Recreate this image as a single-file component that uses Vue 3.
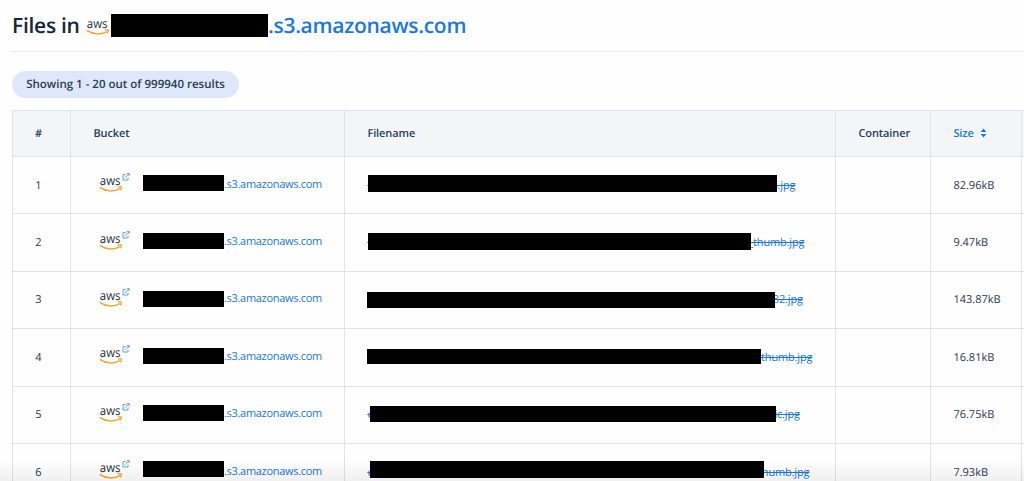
<template>
  <div class="page">
    <header class="title">
      <span class="title-text">Files in</span>
      <svg class="title-logo" viewBox="0 0 24 18">
        <text class="logo-text" x="0.8" y="9.6" textLength="20.6" lengthAdjust="spacingAndGlyphs">aws</text>
        <path class="smile" d="M0.8 12.4 C7 16.8 15 17 20.8 13.6" />
        <path class="smile" d="M18.8 12.2 C20.6 11.6 22.1 11.7 22.3 12.2 C22.5 12.8 22 14.2 21 15.2" />
      </svg>
      <span class="title-mask"></span>
      <a class="title-link">.s3.amazonaws.com</a>
    </header>

    <div class="badge">Showing 1 - 20 out of 999940 results</div>

    <div class="table">
      <div class="row head">
        <div class="cell num">#</div>
        <div class="cell">Bucket</div>
        <div class="cell">Filename</div>
        <div class="cell">Container</div>
        <div class="cell sort">
          <span>Size</span>
          <svg class="sort-icon" viewBox="0 0 7 10">
            <path d="M3.5 0.6 L6.4 4 H0.6 Z M3.5 9.4 L6.4 6 H0.6 Z" />
          </svg>
        </div>
        <div class="cell"></div>
      </div>

      <div v-for="file in files" :key="file.id" class="row">
        <div class="cell num">{{ file.id }}</div>
        <div class="cell bucket">
          <svg class="logo" viewBox="0 0 24 18">
            <text class="logo-text" x="0.8" y="9.6" textLength="20.6" lengthAdjust="spacingAndGlyphs">aws</text>
            <path class="smile" d="M0.8 12.4 C7 16.8 15 17 20.8 13.6" />
            <path class="smile" d="M18.8 12.2 C20.6 11.6 22.1 11.7 22.3 12.2 C22.5 12.8 22 14.2 21 15.2" />
          </svg>
          <svg class="external" viewBox="0 0 8 8">
            <path d="M3.8 1.6 H1 V7 H6 V4.6 M3 4.8 L7 0.8 M4.8 0.6 H7.2 V3" />
          </svg>
          <span class="bucket-mask" :style="{ marginTop: file.shift + 'px' }"></span>
          <a class="bucket-link">.s3.amazonaws.com</a>
        </div>
        <div class="cell">
          <a class="file-link" :style="{ width: file.width + 'px' }">
            <span>{{ file.start }}</span>
            <span>{{ file.end }}</span>
            <span
              class="file-mask"
              :style="{ left: file.left + 'px', top: file.top + 'px', width: file.mask + 'px', height: file.height + 'px' }"
            ></span>
          </a>
        </div>
        <div class="cell"></div>
        <div class="cell size">{{ file.size }}</div>
        <div class="cell"></div>
      </div>
    </div>
    <div class="fade"></div>
  </div>
</template>

<script setup>
// left/top/mask/height describe the redaction bar over each filename
const files = [
  { id: 1, start: 'c', end: 'o.jpg', width: 428, left: 1, top: -2.3, mask: 409, height: 17, shift: -4, size: '82.96kB' },
  { id: 2, start: 'c', end: '_thumb.jpg', width: 437, left: 1, top: -2.3, mask: 383, height: 17, shift: -3, size: '9.47kB' },
  { id: 3, start: '', end: '82.jpg', width: 435.5, left: 0, top: -0.5, mask: 408, height: 16, shift: -2, size: '143.87kB' },
  { id: 4, start: '', end: '_thumb.jpg', width: 445, left: 0, top: -0.5, mask: 394, height: 15, shift: -2, size: '16.81kB' },
  { id: 5, start: 'e', end: 'ic.jpg', width: 432.5, left: 3, top: -1.5, mask: 406, height: 16, shift: -3, size: '76.75kB' },
  { id: 6, start: 'e', end: 'thumb.jpg', width: 442, left: 3, top: -3.3, mask: 394, height: 17, shift: -6, size: '7.93kB' }
]
</script>

<style>
body {
  background: #fefefe;
  overflow: hidden;
}
</style>

<style scoped>
.page {
  box-sizing: border-box;
  position: relative;
  height: 481px;
  padding-left: 12px;
  overflow: hidden;
  font-family: "Open Sans", "Noto Sans", sans-serif;
  font-size: 11px;
  color: #29384f;
  text-rendering: geometricPrecision;
}

.title {
  display: flex;
  align-items: center;
  height: 51px;
  border-bottom: 1px solid #e7eaee;
  font-size: 21px;
  font-weight: 600;
  letter-spacing: -0.28px;
  white-space: nowrap;
}

.title-text {
  width: 74px;
  padding-top: 1px;
  color: #12263f;
}

.title-logo {
  width: 24px;
  height: 18px;
  margin-top: 3px;
  overflow: visible;
}

.title-mask {
  width: 157px;
  height: 23px;
  margin-left: 1px;
  background: #000;
}

.title-link {
  padding-top: 1px;
  color: #1a78e0;
}

.logo-text {
  font-size: 12.5px;
  font-weight: 500;
  letter-spacing: 0;
  fill: #252f3e;
}

.smile {
  fill: none;
  stroke: #f3a32f;
  stroke-width: 1.4;
}

.badge {
  box-sizing: border-box;
  width: 227px;
  height: 27px;
  margin: 19px 0 12px;
  border-radius: 14px;
  background: #dfe7fa;
  color: #283e5c;
  font-size: 11.5px;
  font-weight: 600;
  line-height: 27px;
  text-align: center;
}

.table {
  border-top: 1px solid #e0e4ec;
}

.row {
  display: grid;
  grid-template-columns: 58px 274px 491px 95px 91px 1fr;
  height: 57.4px;
}

.cell {
  display: flex;
  align-items: center;
  box-sizing: border-box;
  min-width: 0;
  padding: 0 0 0 22.4px;
  border-left: 1px solid #e0e3ea;
  border-bottom: 1px solid #e0e3ea;
}

.row.head {
  height: 46px;
  background: #f4f5f7;
  color: #283e5c;
  font-weight: 600;
  letter-spacing: -0.1px;
}

.head .cell {
  padding-bottom: 1px;
}

.cell.num {
  padding-left: 0;
  padding-right: 6px;
  justify-content: center;
}

.cell.sort {
  color: #1a78e0;
}

.sort-icon {
  width: 7px;
  height: 10px;
  margin-left: 6px;
  fill: #1a78e0;
}

.cell.bucket {
  padding-left: 28px;
}

.logo {
  width: 24px;
  height: 18px;
  margin-top: -2px;
  overflow: visible;
}

.external {
  width: 8px;
  height: 8px;
  margin: -16px 0 0 -1px;
  fill: none;
  stroke: #3c8ae0;
  stroke-width: 0.8;
}

.bucket-mask {
  width: 81px;
  height: 16px;
  margin-left: 13px;
  background: #000;
}

.bucket-link {
  margin-top: -2px;
  color: #1a78e0;
  letter-spacing: -0.3px;
}

.file-link {
  position: relative;
  display: flex;
  justify-content: space-between;
  color: #1a78e0;
  letter-spacing: -0.15px;
}

.file-link span {
  text-decoration: line-through;
}

.file-mask {
  position: absolute;
  background: #000;
}

.fade {
  position: absolute;
  left: 0;
  right: 0;
  bottom: 0;
  height: 20px;
  background: linear-gradient(rgba(0, 0, 0, 0), rgba(0, 0, 0, 0.06));
}
</style>
